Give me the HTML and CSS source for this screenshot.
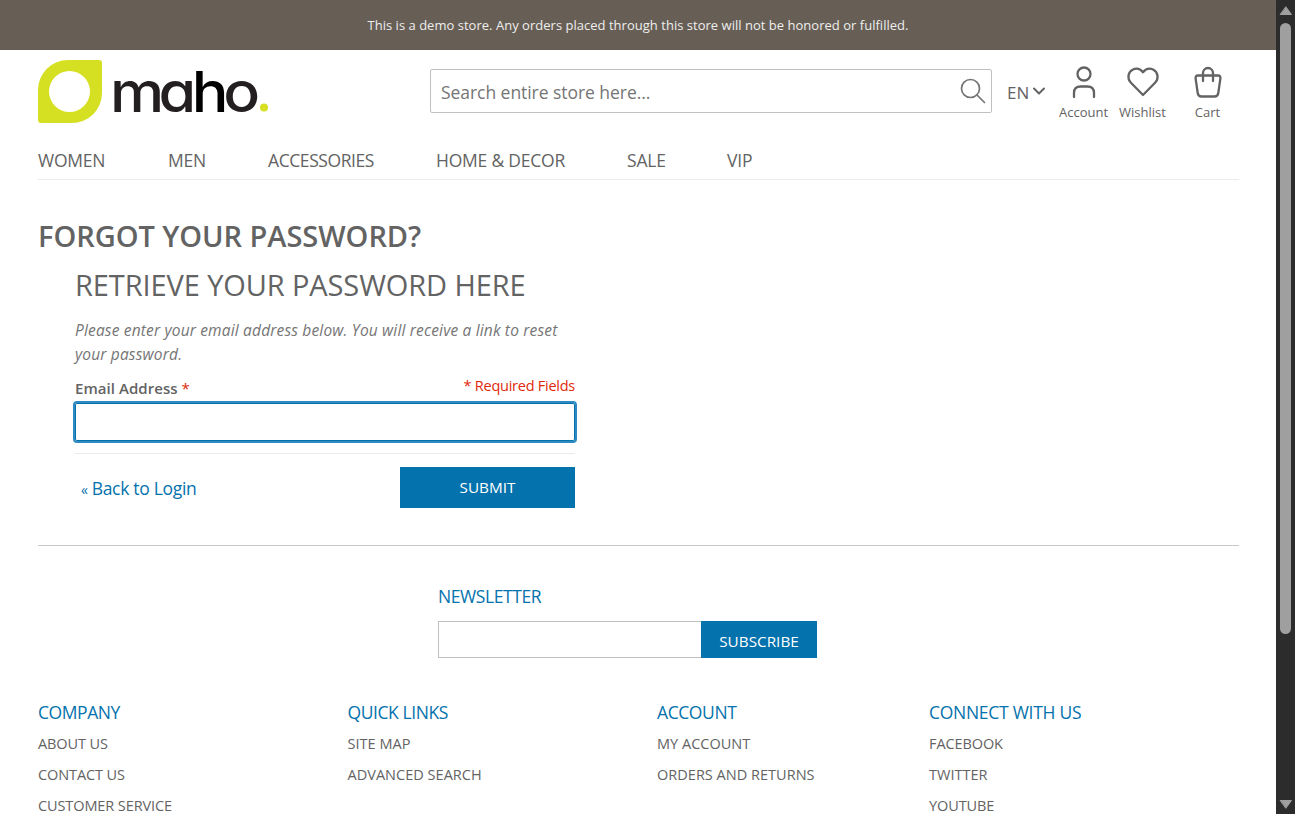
FILE: index.html
```html
<!DOCTYPE html>
<html lang="en">
<head>
<meta charset="utf-8">
<title>Forgot Your Password</title>
<link rel="stylesheet" href="styles.css">
</head>
<body>
<div class="page">
  <div class="notice"><span>This is a demo store. Any orders placed through this store will not be honored or fulfilled.</span></div>
  <div class="container">
    <header class="header">
      <a class="logo" aria-label="maho">
        <svg width="232" height="76" viewBox="0 0 232 76">
          <path fill="#d6e022" fill-rule="evenodd" d="M30 0H61Q64 0 64 3V33A30 30 0 0 1 34 63H3Q0 63 0 60V30A30 30 0 0 1 30 0ZM31.500 11A20.500 20.500 0 1 0 31.500 52A20.500 20.500 0 1 0 31.500 11Z"/>
          <text class="wordmark" transform="translate(72 52) scale(1.09 1)" x="0 44.500 75 104" y="0">mɑ<tspan class="wordmark-h">h</tspan>o</text>
          <circle cx="226" cy="47.500" r="4" fill="#d6e022"/>
        </svg>
      </a>
      <div class="search">
        <span class="search-text">Search entire store here...</span>
        <svg class="search-icon" width="26" height="26" viewBox="0 0 26 26"><circle cx="10.500" cy="10.500" r="9"/><path d="M17 17L24.500 24.500"/></svg>
      </div>
      <div class="lang"><span>EN</span><svg width="12" height="8" viewBox="0 0 12 8"><path d="M1 1.500L6 6.500L11 1.500"/></svg></div>
      <div class="tools">
        <a class="tool account"><svg width="32" height="34" viewBox="0 0 32 34"><circle cx="16" cy="8" r="6.500"/><path d="M6 31V27Q6 20.500 12.500 20.500H19.500Q26 20.500 26 27V31"/></svg><span>Account</span></a>
        <a class="tool wishlist"><svg width="32" height="34" viewBox="0 0 32 34"><path d="M16 29L3.700 16.500C0 12.500 1 6 5.500 3.700C9.500 1.700 13.500 3 16 6.200C18.500 3 22.500 1.700 26.500 3.700C31 6 32 12.500 28.300 16.500Z"/></svg><span>Wishlist</span></a>
        <a class="tool cart"><svg width="32" height="34" viewBox="0 0 32 34"><path d="M6 9.500H26Q28.700 9.500 28.400 12.300L26.300 27Q25.800 30.500 22.500 30.500H9.500Q6.200 30.500 5.700 27L3.600 12.300Q3.300 9.500 6 9.500ZM11 15V7A5 5 0 0 1 21 7V15"/></svg><span>Cart</span></a>
      </div>
    </header>
    <nav class="nav"><a>WOMEN</a><a>MEN</a><a class="tight">ACCESSORIES</a><a>HOME &amp; DECOR</a><a>SALE</a><a>VIP</a></nav>
    <main class="main">
      <h1>FORGOT YOUR PASSWORD?</h1>
      <form class="form">
        <h2>RETRIEVE YOUR PASSWORD HERE</h2>
        <p class="desc">Please enter your email address below. You will receive a link to reset<br>your password.</p>
        <div class="labels"><label>Email Address <em>*</em></label><span class="required">* Required Fields</span></div>
        <div class="email"></div>
        <div class="actions"><a class="back"><small>«</small> <span>Back to Login</span></a><button type="button" class="submit">SUBMIT</button></div>
      </form>
    </main>
    <footer class="footer">
      <div class="newsletter">
        <h3 class="tight">NEWSLETTER</h3>
        <div class="news-form"><div class="news-input"></div><button type="button" class="subscribe">SUBSCRIBE</button></div>
      </div>
      <div class="links">
        <div><h3 class="tight">COMPANY</h3><a>ABOUT US</a><a>CONTACT US</a><a>CUSTOMER SERVICE</a></div>
        <div><h3 class="tight">QUICK LINKS</h3><a class="wide">SITE MAP</a><a class="wide">ADVANCED SEARCH</a></div>
        <div><h3 class="tight">ACCOUNT</h3><a class="wide">MY ACCOUNT</a><a class="wide">ORDERS AND RETURNS</a></div>
        <div><h3>CONNECT WITH US</h3><a>FACEBOOK</a><a class="wide">TWITTER</a><a>YOUTUBE</a></div>
      </div>
    </footer>
  </div>
</div>
<div class="scrollbar">
  <svg width="14" height="10" viewBox="0 0 14 10"><path d="M7 1L12.500 8.500H1.500Z"/></svg>
  <div class="thumb"></div>
  <svg class="down" width="14" height="10" viewBox="0 0 14 10"><path d="M7 9L12.500 1.500H1.500Z"/></svg>
</div>
</body>
</html>
```
FILE: styles.css
```css
* { box-sizing: border-box; }
body { margin: 0; height: 814px; overflow: hidden; display: flex; background: #fff; color: #636363; font-family: "Open Sans", "Noto Sans", sans-serif; font-size: 16px; }
.page { width: 1276px; height: 814px; overflow: hidden; }
h1, h2, h3, p { margin: 0; font-weight: 400; }
a, span, h1, h2, h3, label, button { white-space: nowrap; }
svg { display: block; flex: none; fill: none; stroke-linecap: round; stroke-linejoin: round; overflow: visible; }
.notice { height: 50px; background: #675f55; color: #eee; text-align: center; font-size: 13px; letter-spacing: 0.02px; line-height: 50px; }
.container { width: 1201px; margin-left: 38px; }
.header { height: 92px; display: flex; padding-top: 10px; }
.logo { width: 392px; }
.wordmark { font: 500 56px Inter, sans-serif; fill: #231f20; }
.wordmark-h { fill: #000; }
.search { width: 562px; height: 44px; margin-top: 9px; border: 1px solid #c0c0c0; border-radius: 2px; display: flex; align-items: center; justify-content: space-between; padding: 0 5px 0 10px; font-size: 17.500px; letter-spacing: -0.05px; color: #757575; }
.search-text { padding-top: 1px; }
.search-icon { stroke: #757575; stroke-width: 1.7; }
.lang { width: 57px; height: 44px; margin: 9px 0 0 15px; display: flex; align-items: center; gap: 4px; font-size: 17px; }
.lang span { padding-top: 2px; }
.lang svg { stroke: #636363; stroke-width: 2; }
.tools { display: flex; margin-top: 6px; }
.tool { width: 59px; display: flex; flex-direction: column; align-items: center; font-size: 13px; line-height: 18px; gap: 3px; }
.tool svg { stroke: #636363; stroke-width: 2.3; }
.account { margin-left: -10px; }
.cart { margin-left: 6px; }
.nav { height: 38px; border-bottom: 1px solid #ebebeb; display: grid; grid-template-columns: 130px 100px 168px 191px 100px 100px; font-size: 17.500px; letter-spacing: -0.22px; line-height: 36px; }
.tight { letter-spacing: -0.42px; }
.main { padding-top: 35px; height: 365px; }
h1 { font-size: 29px; font-weight: 600; line-height: 42px; letter-spacing: -0.05px; }
.form { width: 500px; margin-left: 37px; }
h2 { font-size: 29px; line-height: 42px; margin-top: 7px; letter-spacing: -0.1px; }
.desc { font-size: 15.500px; font-style: italic; letter-spacing: 0.17px; line-height: 24px; margin-top: 12px; color: #757575; white-space: nowrap; }
.labels { display: flex; justify-content: space-between; line-height: 24px; height: 36px; padding-top: 10px; font-size: 15px; }
.labels label { font-weight: 600; letter-spacing: 0.05px; }
.labels em { font-style: normal; font-weight: 400; color: #df280a; }
.required { color: #df280a; font-size: 14.500px; letter-spacing: -0.25px; margin-top: -2px; }
.email { width: 504px; height: 42px; margin: -1px 0 0 -2px; border: 2px solid #2e8ac0; border-radius: 4px; box-shadow: inset 0 0 0 1px #0072ae; }
.actions { margin-top: 10px; border-top: 1px solid #ebebeb; padding-top: 13px; display: flex; justify-content: space-between; }
.back { color: #0472ad; font-size: 17.500px; letter-spacing: -0.3px; line-height: 42px; padding-left: 6px; display: flex; gap: 4px; }
.back small { font-size: 14px; line-height: 45px; }
button { font-family: inherit; border: 0; background: #0472ad; color: #fff; padding: 0; }
.submit { width: 175px; height: 41px; font-size: 15.300px; padding-bottom: 2px; }
.footer { border-top: 1px solid #c8c8c8; }
h3 { color: #0472ad; font-size: 17.500px; line-height: 26px; letter-spacing: -0.28px; }
h3.tight { letter-spacing: -0.42px; }
.newsletter { width: 379px; margin: 37px 0 0 400px; }
.news-form { display: flex; margin-top: 12px; }
.news-input { width: 263px; height: 37px; border: 1px solid #c0c0c0; border-right: 0; }
.subscribe { width: 116px; height: 37px; font-size: 15.300px; padding-top: 3px; }
.links { margin-top: 41px; display: grid; grid-template-columns: 309.500px 309.500px 272px 300px; }
.links a { display: block; font-size: 14.500px; line-height: 31px; letter-spacing: -0.1px; }
.links a.wide { letter-spacing: 0.02px; }
.links h3 { margin-bottom: 3px; }
.scrollbar { width: 19px; height: 814px; background: #2c2c2c; display: flex; flex-direction: column; align-items: center; padding-top: 6px; }
.scrollbar svg { fill: #9f9f9f; stroke: #9f9f9f; stroke-width: 1; }
.thumb { width: 11px; height: 611px; margin-top: 7px; border-radius: 6px; background: #9f9f9f; }
.down { margin-top: auto; margin-bottom: 5px; }
```
